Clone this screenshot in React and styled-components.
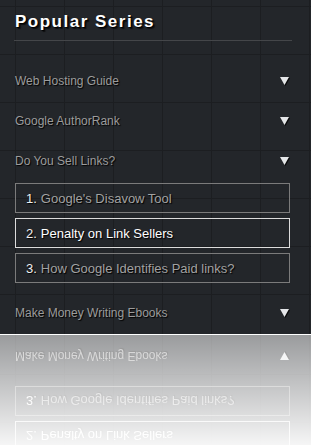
import React from "react";
import styled, { createGlobalStyle } from "styled-components";

const GlobalStyle = createGlobalStyle`
	html, body {
		margin: 0;
		padding: 0;
		background: #ffffff;
	}
	body {
		font-family: "Liberation Sans", Arial, sans-serif;
	}
`;

// styles
const Panel = styled.section`
	width: 311px;
	box-sizing: border-box;
	padding: 12px 21px 1px 15px;
	background-color: #23262a;
	background-image: linear-gradient(to right, #1c1e21 1px, transparent 1px),
		linear-gradient(to bottom, #1c1e21 1px, transparent 1px);
	background-size: 49px 48px;
	background-position: 15px 6px;
`;

// mirrored copy under the panel, faded into the white page
const Mirror = styled.div`
	position: relative;
	margin-top: 1px;
	height: 111px;
	overflow: hidden;

	&::after {
		content: "";
		position: absolute;
		inset: 0;
		background: linear-gradient(
			to bottom,
			rgba(255, 255, 255, 0.54) 0%,
			rgba(255, 255, 255, 0.96) 100%
		);
	}
`;

const Flipped = styled.div`
	transform: scaleY(-1);
	transform-origin: 50% 167px;
`;

const Title = styled.h2`
	margin: 0;
	font-size: 17px;
	line-height: 20px;
	font-weight: 700;
	letter-spacing: 1.5px;
	color: #ffffff;
	text-shadow: 1px 1px 1px #000, 2px 2px 1px rgba(0, 0, 0, 0.6);
`;

const Rule = styled.div`
	height: 1px;
	margin: 8px -2px 20px -1px;
	background: #444649;
`;

const SeriesList = styled.ul`
	list-style: none;
	margin: 0;
	padding: 0;
`;

const SeriesRow = styled.div`
	display: flex;
	align-items: center;
	justify-content: space-between;
	height: 40px;
	font-size: 12px;
	color: #9c9c9c;
	text-shadow: 1px 1px 1px #000;
`;

const Arrow = styled.svg`
	width: 9px;
	height: 8px;
	margin-right: 1px;
	filter: drop-shadow(1px 1px 0 rgba(0, 0, 0, 0.8));
`;

const PartList = styled.ol`
	list-style: none;
	margin: 0;
	padding: 2px 0 10px 0;
	display: flex;
	flex-direction: column;
	gap: 5px;
`;

const Part = styled.li`
	height: 30px;
	box-sizing: border-box;
	display: flex;
	align-items: center;
	padding-left: 10px;
	border: 1px solid ${(p) => (p.$active ? "#dcdcdc" : "#7b7b7b")};
	font-size: 13px;
	color: ${(p) => (p.$active ? "#ffffff" : "#a2a2a2")};
	text-shadow: 1px 1px 1px #000;
`;

const PartNum = styled.span`
	color: #f0f0f0;
	margin-right: 4px;
`;

const series = [
	{ name: "Web Hosting Guide" },
	{ name: "Google AuthorRank" },
	{
		name: "Do You Sell Links?",
		parts: [
			"Google's Disavow Tool",
			"Penalty on Link Sellers",
			"How Google Identifies Paid links?",
		],
		active: 1,
	},
	{ name: "Make Money Writing Ebooks" },
];

function DownArrow() {
	return (
		<Arrow viewBox='0 0 9 8'>
			<polygon points='0,0 9,0 4.5,8' fill='#e4e6e8' />
		</Arrow>
	);
}

function SeriesPanel() {
	return (
		<Panel>
			<Title>Popular Series</Title>
			<Rule />

			<SeriesList>
				{series.map((item) => (
					<li key={item.name}>
						<SeriesRow>
							<span>{item.name}</span>
							<DownArrow />
						</SeriesRow>

						{item.parts && (
							<PartList>
								{item.parts.map((part, i) => (
									<Part key={part} $active={i === item.active}>
										<PartNum>{i + 1}.</PartNum>
										{part}
									</Part>
								))}
							</PartList>
						)}
					</li>
				))}
			</SeriesList>
		</Panel>
	);
}

export default function App() {
	return (
		<>
			<GlobalStyle />
			<SeriesPanel />
			<Mirror aria-hidden='true'>
				<Flipped>
					<SeriesPanel />
				</Flipped>
			</Mirror>
		</>
	);
}
